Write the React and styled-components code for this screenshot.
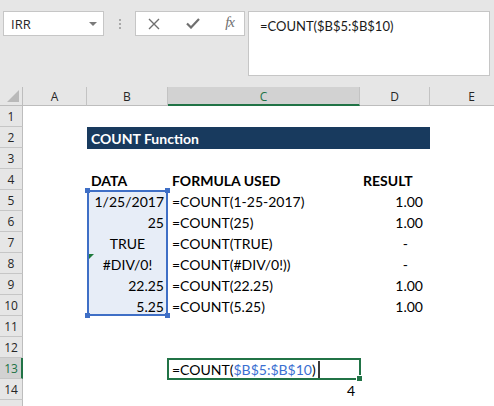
import React from "react";
import styled, { createGlobalStyle } from "styled-components";

const SHEET_FONT = `Lato, "Open Sans", sans-serif`;
const UI_FONT = `"Open Sans", "Noto Sans", sans-serif`;
const GREEN = "#217346";
const BLUE = "#3f6fc6";

const GlobalStyle = createGlobalStyle`
  html, body { margin: 0; padding: 0; background: #fff; overflow: hidden; }
  #root { width: 494px; height: 406px; overflow: hidden; }
`;

const Window = styled.div`
  width: 494px;
  height: 406px;
  overflow: hidden;
  display: flex;
  flex-direction: column;
  background: #fff;
`;

const FormulaArea = styled.div`
  flex: none;
  height: 87px;
  box-sizing: border-box;
  background: #e6e6e6;
  display: flex;
  align-items: flex-start;
  padding: 11px 0 0 3px;
`;

const NameBox = styled.div`
  width: 101px;
  height: 25px;
  box-sizing: border-box;
  background: #fff;
  border: 1px solid #c6c6c6;
  display: flex;
  align-items: center;
  justify-content: space-between;
  padding: 0 6px 0 7px;
  font: 13px ${UI_FONT};
  color: #262626;
`;

const Caret = styled.span`
  width: 0;
  height: 0;
  border-left: 4px solid transparent;
  border-right: 4px solid transparent;
  border-top: 4px solid #7a7a7a;
`;

const Grip = styled.div`
  width: 31px;
  height: 25px;
  display: flex;
  flex-direction: column;
  align-items: center;
  justify-content: center;
  gap: 2px;
`;

const GripDot = styled.span`
  width: 2px;
  height: 2px;
  background: #a9a9a9;
`;

const FxTools = styled.div`
  width: 110px;
  height: 25px;
  box-sizing: border-box;
  background: #fff;
  border: 1px solid #c6c6c6;
  display: flex;
  align-items: center;
  justify-content: space-between;
  padding: 0 10px 0 12px;
`;

const FxLabel = styled.span`
  font: italic 15px "Liberation Serif", serif;
  color: #707070;
  letter-spacing: -1px;
  margin-top: -2px;
`;

const FormulaInput = styled.div`
  margin-left: 3px;
  width: 242px;
  height: 65px;
  box-sizing: border-box;
  background: #fff;
  border: 1px solid #c6c6c6;
  padding: 6px 0 0 11px;
  font: 13px ${SHEET_FONT};
  color: #1a1a1a;
`;

const Sheet = styled.div`
  flex: none;
  display: grid;
  grid-template-columns: 23px 64px 81px 192px 70px 84px;
  grid-template-rows: 19px repeat(15, 21px);
  width: 514px;
`;

const Corner = styled.div`
  grid-row: 1;
  grid-column: 1;
  box-sizing: border-box;
  background: #e6e6e6;
  border-right: 1px solid #bdbdbd;
  border-bottom: 1px solid #bdbdbd;
  display: flex;
  align-items: flex-end;
  justify-content: flex-end;
  padding: 0 3px 3px 0;
`;

const CornerTriangle = styled.span`
  width: 0;
  height: 0;
  border-left: 12px solid transparent;
  border-bottom: 12px solid #b9b9b9;
`;

const ColHead = styled.div`
  grid-row: 1;
  grid-column: ${(p) => p.$c};
  box-sizing: border-box;
  background: ${(p) => (p.$active ? "#d2d2d2" : "#e6e6e6")};
  border-right: 1px solid #c3c3c3;
  border-bottom: ${(p) => (p.$active ? `2px solid ${GREEN}` : "1px solid #bdbdbd")};
  color: ${(p) => (p.$active ? GREEN : "#262626")};
  font: 12px ${UI_FONT};
  display: flex;
  align-items: center;
  justify-content: center;
  padding-top: ${(p) => (p.$active ? "1px" : "0")};
`;

const RowHead = styled.div`
  grid-row: ${(p) => p.$r};
  grid-column: 1;
  box-sizing: border-box;
  background: ${(p) => (p.$active ? "#d2d2d2" : "#e6e6e6")};
  border-bottom: 1px solid #c6c6c6;
  border-right: ${(p) => (p.$active ? `2px solid ${GREEN}` : "1px solid #bdbdbd")};
  color: ${(p) => (p.$active ? GREEN : "#262626")};
  font: 12px ${UI_FONT};
  display: flex;
  align-items: center;
  justify-content: center;
  padding-left: ${(p) => (p.$active ? "1px" : "0")};
`;

const Cell = styled.div`
  grid-row: ${(p) => p.$r};
  grid-column: ${(p) => p.$c};
  position: relative;
  box-sizing: border-box;
  display: flex;
  align-items: flex-end;
  justify-content: ${(p) => p.$align || "flex-start"};
  padding: 0 ${(p) => p.$pr || 0}px 1px ${(p) => p.$pl || 0}px;
  font: ${(p) => (p.$bold ? 700 : 400)} 14px ${SHEET_FONT};
  color: #000;
  white-space: nowrap;
`;

const TitleBar = styled.div`
  grid-row: 3;
  grid-column: 3 / 6;
  background: #183a5e;
  color: #fff;
  font: 700 14px ${SHEET_FONT};
  display: flex;
  align-items: flex-end;
  padding: 0 0 2px 4px;
  margin-bottom: -1px;
`;

const Selection = styled.div`
  grid-row: 6 / 12;
  grid-column: 3;
  position: relative;
  box-sizing: border-box;
  background: #e7edf7;
  border: 2px solid ${BLUE};
`;

const Handle = styled.span`
  position: absolute;
  width: 5px;
  height: 5px;
  background: ${BLUE};
  ${(p) => (p.$top ? "top: -4px;" : "bottom: -4px;")}
  ${(p) => (p.$left ? "left: -4px;" : "right: -4px;")}
`;

const ErrorFlag = styled.span`
  position: absolute;
  top: 1px;
  left: 2px;
  width: 0;
  height: 0;
  border-top: 5px solid #1e7a3c;
  border-right: 5px solid transparent;
`;

const EditCell = styled.div`
  grid-row: 14;
  grid-column: 4;
  position: relative;
  box-sizing: border-box;
  margin: 0 -1px -1px -1px;
  border: 2px solid ${GREEN};
  display: flex;
  align-items: flex-end;
  padding: 0 0 0 3px;
  font: 14px ${SHEET_FONT};
  color: #000;
  white-space: nowrap;
`;

const RefText = styled.span`
  color: #3a6fd1;
`;

const Caret2 = styled.span`
  display: inline-block;
  width: 2px;
  height: 17px;
  background: #3a3a3a;
  margin: 0 0 0 2px;
  align-self: center;
`;

const FillHandle = styled.span`
  position: absolute;
  right: -3px;
  bottom: -3px;
  width: 5px;
  height: 5px;
  background: ${GREEN};
  border-top: 1px solid #fff;
  border-left: 1px solid #fff;
`;

const CrossIcon = () => (
  <svg width="12" height="12" viewBox="0 0 12 12">
    <path d="M1 1 L11 11 M11 1 L1 11" stroke="#6f6f6f" strokeWidth="1.4" fill="none" />
  </svg>
);

const CheckIcon = () => (
  <svg width="14" height="11" viewBox="0 0 14 11">
    <path d="M1 5.5 L5 9.5 L13 1" stroke="#6f6f6f" strokeWidth="2.2" fill="none" />
  </svg>
);

const columns = ["A", "B", "C", "D", "E"];

const rows = [
  { r: 5, b: "1/25/2017", bAlign: "flex-end", c: "=COUNT(1-25-2017)", d: "1.00" },
  { r: 6, b: "25", bAlign: "flex-end", c: "=COUNT(25)", d: "1.00" },
  { r: 7, b: "TRUE", bAlign: "center", c: "=COUNT(TRUE)", d: "-" },
  { r: 8, b: "#DIV/0!", bAlign: "center", c: "=COUNT(#DIV/0!))", d: "-", flag: true },
  { r: 9, b: "22.25", bAlign: "flex-end", c: "=COUNT(22.25)", d: "1.00" },
  { r: 10, b: "5.25", bAlign: "flex-end", c: "=COUNT(5.25)", d: "1.00" },
];

export default function App() {
  return (
    <Window>
      <GlobalStyle />
      <FormulaArea>
        <NameBox>
          <span>IRR</span>
          <Caret />
        </NameBox>
        <Grip>
          <GripDot />
          <GripDot />
          <GripDot />
        </Grip>
        <FxTools>
          <CrossIcon />
          <CheckIcon />
          <FxLabel>fx</FxLabel>
        </FxTools>
        <FormulaInput>=COUNT($B$5:$B$10)</FormulaInput>
      </FormulaArea>

      <Sheet>
        <Corner>
          <CornerTriangle />
        </Corner>
        {columns.map((c, i) => (
          <ColHead key={c} $c={i + 2} $active={c === "C"}>
            {c}
          </ColHead>
        ))}
        {Array.from({ length: 15 }, (_, i) => (
          <RowHead key={i} $r={i + 2} $active={i + 1 === 13}>
            {i + 1 <= 14 ? i + 1 : ""}
          </RowHead>
        ))}

        <TitleBar>COUNT Function</TitleBar>

        <Cell $r={5} $c={3} $pl={4} $bold>DATA</Cell>
        <Cell $r={5} $c={4} $pl={4} $bold>FORMULA USED</Cell>
        <Cell $r={5} $c={5} $pl={3} $bold>RESULT</Cell>

        <Selection>
          <Handle $top $left />
          <Handle $top />
          <Handle $left />
          <Handle />
        </Selection>

        {rows.map((row) => (
          <React.Fragment key={row.r}>
            <Cell $r={row.r + 1} $c={3} $align={row.bAlign} $pr={row.bAlign === "flex-end" ? 4 : 0}>
              {row.flag && <ErrorFlag />}
              {row.b}
            </Cell>
            <Cell $r={row.r + 1} $c={4} $pl={4}>{row.c}</Cell>
            <Cell $r={row.r + 1} $c={5} $align="flex-end" $pr={row.d === "-" ? 22 : 7}>
              {row.d}
            </Cell>
          </React.Fragment>
        ))}

        <EditCell>
          =COUNT(<RefText>$B$5:$B$10</RefText>)
          <Caret2 />
          <FillHandle />
        </EditCell>
        <Cell $r={15} $c={4} $align="flex-end" $pr={5}>4</Cell>
      </Sheet>
    </Window>
  );
}
